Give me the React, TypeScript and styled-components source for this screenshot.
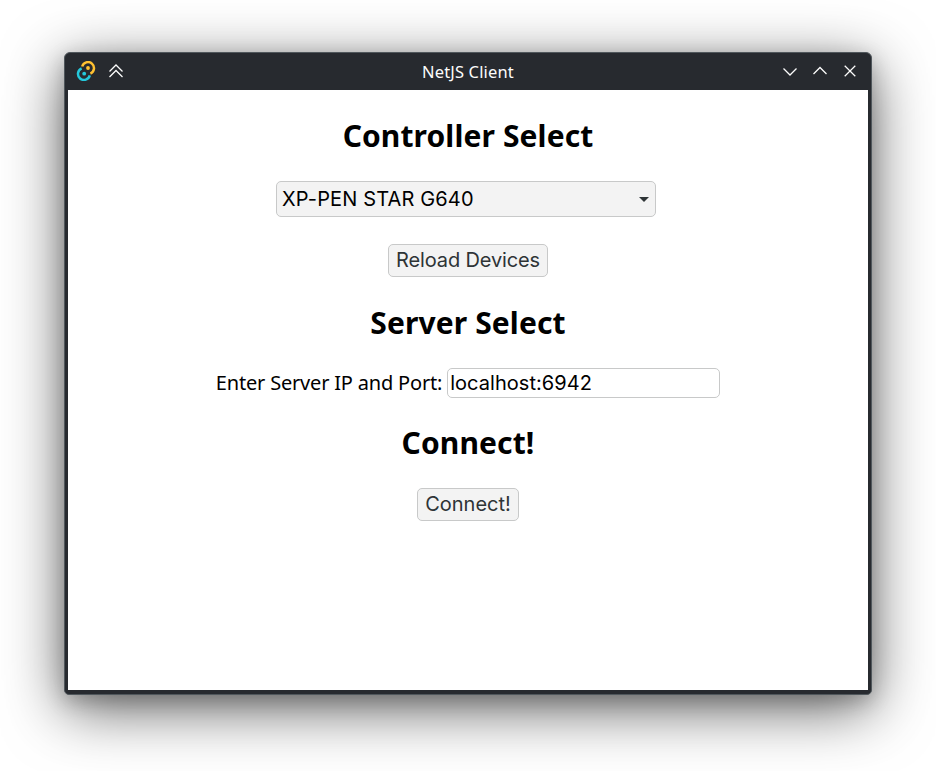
import React from "react";
import styled, { createGlobalStyle } from "styled-components";

const GlobalStyle = createGlobalStyle`
  * { box-sizing: border-box; }
  body { margin: 0; background: #fff; font-family: "Noto Sans", sans-serif; color: #000; }
`;

const Desktop = styled.div`
  width: 936px;
  height: 771px;
  padding: 52px 64px 0;
  overflow: hidden;
`;

const Window = styled.div`
  display: flex;
  flex-direction: column;
  height: 643px;
  padding: 0 3px 4px;
  border: 1px solid #50575c;
  border-radius: 6px 6px 5px 5px;
  background: #272a2f;
  box-shadow: 0 14px 60px rgba(0, 0, 0, 0.62), 0 6px 20px rgba(0, 0, 0, 0.2);
`;

const TitleBar = styled.header`
  display: grid;
  grid-template-columns: 1fr auto 1fr;
  align-items: center;
  flex: 0 0 37px;
  padding-bottom: 2px;
  color: #fcfcfc;
`;

const TitleGroup = styled.div<{ $end?: boolean }>`
  display: flex;
  gap: 10px;
  justify-content: ${(p) => (p.$end ? "flex-end" : "flex-start")};
  padding: 0 8px;
`;

const Icon = styled.svg`
  display: block;
  width: 20px;
  height: 20px;
  fill: none;
  stroke: #fcfcfc;
  stroke-width: 1.25;
`;

const LogoIcon = styled(Icon)`
  stroke-width: 2.5;
`;

const Title = styled.div`
  font-size: 16.5px;
  letter-spacing: 0.15px;
  line-height: 24px;
  padding-top: 2px;
`;

const Content = styled.main`
  display: flex;
  flex-direction: column;
  align-items: center;
  flex: 1;
  background: #fff;
`;

const Heading = styled.h2<{ $top: number }>`
  margin: ${(p) => p.$top}px 0 25px;
  font-size: 30px;
  font-weight: 700;
  letter-spacing: 0.11px;
  line-height: 41px;
`;

const Select = styled.button`
  display: flex;
  align-items: center;
  justify-content: space-between;
  width: 380px;
  height: 36px;
  margin-right: 4px;
  padding: 0 6px 0 5px;
  border: 1px solid #c8c9c9;
  border-radius: 5px;
  background: #f3f3f3;
  color: #000;
  font: 20px Inter, sans-serif;
  letter-spacing: 0.14px;
`;

const Arrow = styled.svg`
  width: 10px;
  height: 5px;
  fill: #2e3436;
`;

const Button = styled.button<{ $width: number; $top?: number; $tracking?: number }>`
  width: ${(p) => p.$width}px;
  height: 33px;
  margin-top: ${(p) => p.$top ?? 0}px;
  padding: 0 0 2px;
  border: 1px solid #c8c9c9;
  border-radius: 5px;
  background: #f3f3f3;
  color: #2e3436;
  font: 20px Inter, sans-serif;
  letter-spacing: ${(p) => p.$tracking ?? 0}px;
  white-space: nowrap;
`;

const Field = styled.label`
  display: flex;
  align-items: center;
  gap: 5px;
  height: 30px;
  font-size: 20px;
  white-space: nowrap;
`;

const FieldLabel = styled.span`
  padding-bottom: 2px;
  letter-spacing: -0.19px;
`;

const Input = styled.input`
  width: 273px;
  height: 30px;
  padding: 0 2px;
  border: 1px solid #c8c9c9;
  border-radius: 5px;
  background: #fff;
  color: #000;
  font: 20px Inter, sans-serif;
  letter-spacing: 0.05px;
  outline: none;
`;

const AppLogo = () => (
  <LogoIcon viewBox="0 0 20 20">
    <path d="M6.2 5.5A6 6 0 1 1 14.4 12.6" stroke="#ffc131" />
    <path d="M13.8 14.4A6 6 0 1 1 5.6 7.4" stroke="#24c8db" />
    <circle cx="12" cy="7" r="1.9" fill="#ffc131" stroke="none" />
    <circle cx="8.2" cy="12.7" r="1.9" fill="#24c8db" stroke="none" />
  </LogoIcon>
);

export default function App() {
  return (
    <Desktop>
      <GlobalStyle />
      <Window>
        <TitleBar>
          <TitleGroup>
            <AppLogo />
            <Icon viewBox="0 0 20 20"><path d="M3.5 10.5 10 4l6.5 6.5M3.5 16 10 9.5l6.5 6.5" /></Icon>
          </TitleGroup>
          <Title>NetJS Client</Title>
          <TitleGroup $end>
            <Icon viewBox="0 0 20 20"><path d="m3.5 7.5 6.5 6.5 6.5-6.5" /></Icon>
            <Icon viewBox="0 0 20 20"><path d="M3.5 13 10 6.5l6.5 6.5" /></Icon>
            <Icon viewBox="0 0 20 20"><path d="m4.7 4.7 10.6 10.6M15.3 4.7 4.7 15.3" /></Icon>
          </TitleGroup>
        </TitleBar>
        <Content>
          <Heading $top={25}>Controller Select</Heading>
          <Select>
            XP-PEN STAR G640
            <Arrow viewBox="0 0 10 5"><path d="M0 0h10L5 5z" /></Arrow>
          </Select>
          <Button $width={160} $top={27} $tracking={-0.14}>Reload Devices</Button>
          <Heading $top={25}>Server Select</Heading>
          <Field>
            <FieldLabel>Enter Server IP and Port:</FieldLabel>
            <Input defaultValue="localhost:6942" />
          </Field>
          <Heading $top={24}>Connect!</Heading>
          <Button $width={102}>Connect!</Button>
        </Content>
      </Window>
    </Desktop>
  );
}
